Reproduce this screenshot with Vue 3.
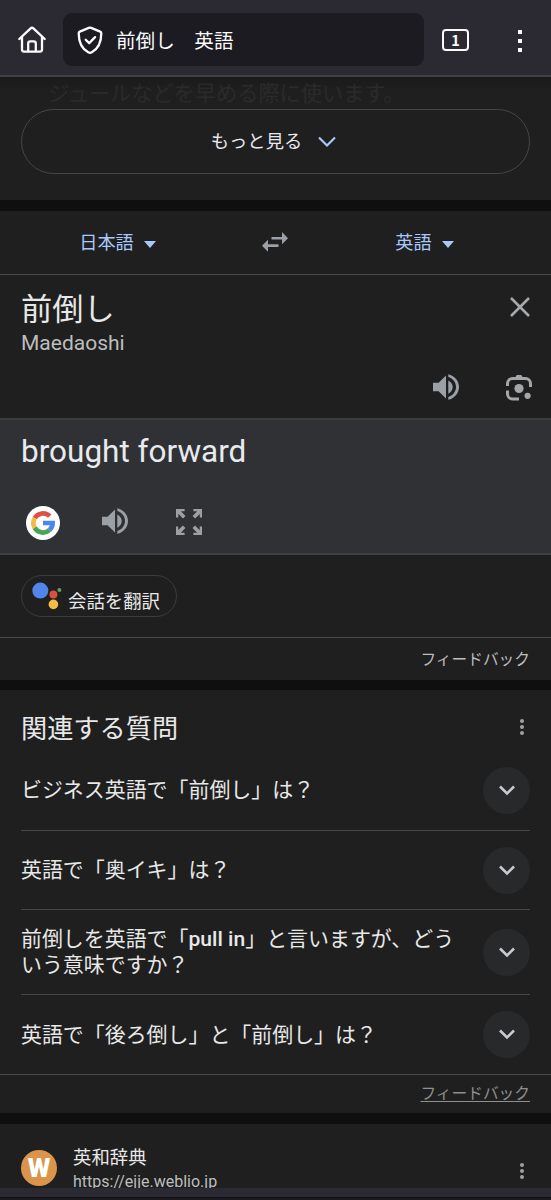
<script setup>
const questions = [
  { parts: [{ t: 'ビジネス英語で「前倒し」は？' }], size: 'first' },
  { parts: [{ t: '英語で「奥イキ」は？' }], size: 'second' },
  { parts: [{ t: '前倒しを英語で「' }, { t: 'pull in', b: true }, { t: '」と言いますが、どういう意味ですか？' }], size: 'third' },
  { parts: [{ t: '英語で「後ろ倒し」と「前倒し」は？' }], size: 'fourth' },
]
const corners = [0, 90, 180, 270]
</script>

<template>
  <div class="screen">
    <header class="toolbar">
      <svg class="home" width="28" height="28" viewBox="0 0 28 28" fill="none" stroke="#fbfbfe" stroke-width="2.3" stroke-linecap="round" stroke-linejoin="round">
        <path d="M1.3 13 12.6 2.4a2 2 0 0 1 2.8 0L26.7 13M4 11v12.6a2 2 0 0 0 2 2h16a2 2 0 0 0 2-2V11M10.2 25V17.4a2 2 0 0 1 2-2h3.6a2 2 0 0 1 2 2V25" />
      </svg>
      <div class="address">
        <svg width="26" height="28" viewBox="0 0 26 28" fill="none" stroke="#fbfbfe" stroke-width="2.3" stroke-linecap="round" stroke-linejoin="round">
          <path d="M11.8 1.9a3 3 0 0 1 2.4 0l9 3.7a1.7 1.7 0 0 1 1.1 1.6C24.3 14.500 22 22.300 14.800 26.200a3.600 3.600 0 0 1-3.600 0C4 22.300 1.700 14.500 1.700 7.200a1.700 1.700 0 0 1 1.100-1.600z" />
          <path d="m8.700 13.700 3.500 3.400 5.900-6" />
        </svg>
        <span>前倒し　英語</span>
      </div>
      <div class="tabs"><span>1</span></div>
      <div class="menu"><i></i><i></i><i></i></div>
    </header>

    <section class="more">
      <p class="ghost">ジュールなどを早める際に使います。</p>
      <div class="more-button">
        <span>もっと見る</span>
        <svg width="18" height="12" viewBox="0 0 18 12" fill="none" stroke="#a8c7fa" stroke-width="2.2"><path d="m1 1.500 8 8 8-8" /></svg>
      </div>
    </section>

    <section class="languages">
      <div class="lang from">日本語<i></i></div>
      <svg class="swap" width="26" height="20" viewBox="0 0 26 20" fill="#9aa0a6">
        <path d="M9.500 5H20V0l6 6.200-6 6V7.500H9.500zM16.500 12.300H6V7.800L0 13.800l6 6v-4.900h10.500z" />
      </svg>
      <div class="lang to">英語<i></i></div>
    </section>

    <section class="source">
      <div>
        <div class="source-word">前倒し</div>
        <div class="romaji">Maedaoshi</div>
      </div>
      <svg class="close" width="20" height="20" viewBox="0 0 20 20" stroke="#a6aaad" stroke-width="2.500"><path d="m1 1 18 18M19 1 1 19" /></svg>
      <div class="source-tools">
        <svg width="26" height="26" viewBox="0 0 26 26" fill="#9aa0a6">
          <path d="M0 8.700h5.600L13 1.500v23l-7.400-7.200H0zM15.300 6.400c2.600 1.300 4.400 3.700 4.400 6.600s-1.800 5.400-4.400 6.700zM15.300.2C21.300 1.500 26 6.700 26 13s-4.700 11.500-10.700 12.800v-2.900c4.500-1.300 7.700-5.200 7.700-9.900s-3.200-8.600-7.700-9.900z" />
        </svg>
        <svg width="26" height="27" viewBox="0 0 26 27" fill="none" stroke="#a3a7aa" stroke-width="3">
          <path d="M1.500 12V9.500a5 5 0 0 1 5-5h13a5 5 0 0 1 5 5V13M1.500 16.500V20a5 5 0 0 0 5 5h6.500" />
          <path d="M9.500 3 10.700.9h4.600L16.500 3v1h-7z" fill="#a3a7aa" stroke="none" />
          <circle cx="13" cy="14.500" r="4.600" fill="#a3a7aa" stroke="none" />
          <circle cx="21.600" cy="21.800" r="3.100" fill="#a3a7aa" stroke="none" />
        </svg>
      </div>
    </section>

    <section class="result">
      <div class="translated">brought forward</div>
      <div class="result-tools">
        <div class="google">
          <svg width="24" height="24" viewBox="0 0 24 24" fill="none" stroke-width="4.700">
            <path d="M3.700 7.200A9.600 9.600 0 0 1 18.800 5.200" stroke="#dd5144" />
            <path d="M3.700 7.200a9.600 9.600 0 0 0 0 9.600" stroke="#f2bd42" />
            <path d="M3.700 16.800A9.600 9.600 0 0 0 18.500 19" stroke="#4aa458" />
            <path d="M12 12h9.600a9.500 9.500 0 0 1-3.100 7" stroke="#4a86ec" />
          </svg>
        </div>
        <svg class="speak" width="26" height="26" viewBox="0 0 26 26" fill="#9aa0a6">
          <path d="M0 8.700h5.600L13 1.500v23l-7.400-7.200H0zM15.300 6.400c2.600 1.300 4.400 3.700 4.400 6.600s-1.800 5.400-4.400 6.700zM15.300.2C21.300 1.500 26 6.700 26 13s-4.700 11.500-10.700 12.800v-2.900c4.500-1.300 7.700-5.200 7.700-9.900s-3.200-8.600-7.700-9.900z" />
        </svg>
        <svg class="expand" width="26" height="26" viewBox="0 0 26 26" fill="#9aa0a6">
          <path v-for="c in corners" :key="c" d="M0 0h8.600v2.200H4.900l4.600 4.700-2.500 2.500-4.700-4.600v3.800H0z" :transform="`rotate(${c} 13 13)`" />
        </svg>
      </div>
    </section>

    <section class="conversation">
      <div class="chip">
        <svg width="30" height="28" viewBox="0 0 30 28">
          <circle cx="8.300" cy="8.600" r="8" fill="#5086ec" />
          <circle cx="21.400" cy="12.600" r="4" fill="#d95040" />
          <circle cx="21.400" cy="22.400" r="4.800" fill="#f2bd42" />
          <circle cx="27.400" cy="8" r="2" fill="#58a55c" />
        </svg>
        <span>会話を翻訳</span>
      </div>
    </section>
    <section class="feedback">フィードバック</section>

    <section class="questions">
      <div class="heading">
        <h2>関連する質問</h2>
        <div class="dots"><i></i><i></i><i></i></div>
      </div>
      <div v-for="(q, n) in questions" :key="n" class="question" :class="q.size">
        <p><template v-for="(p, k) in q.parts" :key="k"><b v-if="p.b">{{ p.t }}</b><template v-else>{{ p.t }}</template></template></p>
        <div class="round">
          <svg width="16" height="11" viewBox="0 0 16 11" fill="none" stroke="#c8cad0" stroke-width="2.600"><path d="m1 1.500 7 7 7-7" /></svg>
        </div>
      </div>
    </section>
    <section class="feedback linked"><span>フィードバック</span></section>

    <section class="site">
      <div class="favicon">W</div>
      <div class="site-text">
        <div class="site-name">英和辞典</div>
        <div class="site-url">https://ejje.weblio.jp</div>
      </div>
      <div class="dots"><i></i><i></i><i></i></div>
    </section>
    <footer class="bottom"></footer>
  </div>
</template>

<style>
body { background: #0f0f0f; }
</style>

<style scoped>
* { box-sizing: border-box; }
svg { display: block; flex: none; }
p, h2 { margin: 0; font-weight: 400; }
.screen {
  width: 551px; height: 1200px; overflow: hidden;
  background: #0f0f0f; color: #e8e8e8;
  font-family: "Noto Sans CJK JP", "Noto Sans", sans-serif;
}
section { background: #1f1f1f; }
.toolbar {
  height: 77px; background: #2b2a33; border-bottom: 2px solid #42414a;
  display: flex; align-items: flex-start;
}
.home { margin: 26px 17px 0 18px; }
.address {
  width: 361px; height: 53px; margin-top: 13px; padding-left: 14px;
  display: flex; align-items: center; gap: 13px;
  background: #1c1b22; border-radius: 9px; color: #fbfbfe; font-size: 19.6px;
}
.address span { line-height: 28px; }
.tabs {
  width: 27px; height: 22px; margin: 29px 0 0 18px;
  border: 2px solid #fbfbfe; border-radius: 4px;
  color: #fbfbfe; font-weight: 700; font-size: 14.5px; line-height: 17px; text-align: center;
}
.menu { margin: 30px 0 0 49px; display: flex; flex-direction: column; gap: 5px; }
.menu i { width: 4px; height: 4px; background: #fbfbfe; }
.more {
  height: 123px; margin-bottom: 11px; padding: 0 21px;
  background: linear-gradient(#1a1a1a, #1f1f1f 14px);
}
.ghost { height: 32px; padding-left: 27px; font-size: 21.2px; line-height: 30px; color: #2b2a2b; white-space: nowrap; }
.more-button {
  height: 65px; border: 1px solid #444548; border-radius: 33px;
  display: flex; align-items: center; justify-content: center; gap: 16px;
  color: #e8e8f0; font-size: 18.3px; line-height: 30px; padding-right: 4px;
}
.more-button span { margin-top: -3px; }
.languages {
  height: 64px; border-bottom: 1px solid #4a4a4a;
  display: grid; grid-template-columns: 238px 74px 239px; align-items: start; justify-items: center;
  color: #a8c7fa; font-size: 18.2px;
}
.lang { display: flex; align-items: center; gap: 10px; line-height: 30px; margin-top: 15px; }
.lang i { border: 6px solid transparent; border-top: 7px solid #a8c7fa; border-bottom: 0; margin-top: 7px; }
.lang.to { margin-right: 14px; }
.lang.from { margin-right: 3px; }
.swap { margin-top: 21px; }
.source {
  height: 145px; border-bottom: 2px solid #3c3d3f; padding: 0 19px 0 21px;
  display: grid; grid-template-columns: 1fr auto; grid-template-rows: 99px 1fr;
}
.source-word { margin-top: 9px; height: 47px; font-size: 31.2px; line-height: 45px; }
.romaji { font-family: Roboto, sans-serif; font-size: 21px; line-height: 24px; color: #bdbdbd; }
.close { margin: 22px 2px 0 0; }
.source-tools { grid-column: 1 / 3; display: flex; justify-content: flex-end; align-items: flex-start; gap: 47px; }
.result { height: 135px; background: #303134; border-bottom: 2px solid #3f4042; padding: 0 21px; }
.translated { padding-top: 12px; height: 86px; font-family: Roboto, sans-serif; font-size: 31.5px; line-height: 40px; color: #e8eaed; }
.result-tools { display: flex; align-items: flex-start; padding-left: 5px; }
.google {
  width: 34px; height: 34px; border-radius: 50%; background: #fff;
  display: flex; align-items: center; justify-content: center;
}
.speak { margin: 2px 0 0 42px; }
.expand { margin: 3px 0 0 48px; }
.conversation { height: 83px; border-bottom: 1px solid #4a4a4a; padding: 20px 21px 0; }
.chip {
  width: 156px; height: 42px; border: 1px solid #3a3b3d; border-radius: 21px;
  display: flex; gap: 6px; padding: 6px 0 0 10px; font-size: 18.4px; line-height: 30px; color: #e8e8e8;
}
.chip span { margin-top: 3px; white-space: nowrap; }
.feedback {
  height: 42px; margin-bottom: 10px; padding-right: 21px; text-align: right;
  color: #bdbdbd; font-size: 15.7px; line-height: 42px;
}
.feedback.linked { height: 38px; margin-bottom: 11px; line-height: 36px; color: #8f8f8f; }
.linked span { text-decoration: underline; text-decoration-thickness: 1px; text-underline-offset: 2px; text-decoration-skip-ink: none; }
.questions { border-bottom: 1px solid #4a4a4a; }
.heading { height: 60px; padding: 0 27px 0 21px; display: flex; justify-content: space-between; }
.heading h2 { font-size: 26.2px; line-height: 38px; padding-top: 18px; }
.heading .dots { margin-top: 29px; }
.dots { display: flex; flex-direction: column; gap: 2px; flex: none; }
.dots i { width: 4px; height: 4px; border-radius: 50%; background: #a0a0a0; }
.question {
  margin: 0 21px; border-bottom: 1px solid #484848;
  display: flex; align-items: center; justify-content: space-between;
}
.question p { width: 440px; margin-top: -4px; font-size: 20.95px; line-height: 26px; color: #e8e8e8; }
.question b { font-family: Roboto, sans-serif; font-weight: 500; font-size: 21.1px; line-height: 1; }
.question.first { height: 81px; }
.question.second { height: 79px; }
.question.third { height: 85px; }
.question.fourth { height: 79px; border-bottom: 0; }
.round {
  width: 47px; height: 47px; border-radius: 50%; background: #28292a; flex: none;
  display: flex; align-items: center; justify-content: center;
}
.site { height: 64px; overflow: hidden; padding: 0 27px 0 21px; display: flex; align-items: flex-start; }
.favicon {
  width: 36px; height: 36px; margin-top: 26px; border-radius: 50%; background: #da944b;
  color: #fff; font-family: Roboto, sans-serif; font-weight: 900; font-size: 26px; line-height: 36px; text-align: center;
}
.site-text { flex: 1; margin-left: 16px; padding-top: 18px; }
.site-name { font-size: 18.4px; line-height: 29px; }
.site-url { font-family: Roboto, sans-serif; font-size: 16px; line-height: 22px; color: #bdbdbd; }
.site .dots { margin-top: 39px; }
.bottom { height: 13px; background: #1c1b22; border-top: 9px solid #2b2a33; box-shadow: inset 0 1px #0f0f12; }
</style>
